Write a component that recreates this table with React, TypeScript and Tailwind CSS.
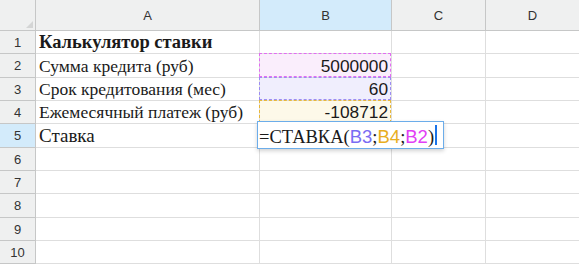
import React from "react";

type Mark = "pink" | "violet" | "amber";

type Row = {
  h: string;
  a?: React.ReactNode;
  b?: string;
  mark?: Mark;
};

const rows: Row[] = [
  { h: "h-[23px]", a: <span className="font-bold text-[18.5px]">Калькулятор ставки</span> },
  { h: "h-[24px]", a: "Сумма кредита (руб)", b: "5000000", mark: "pink" },
  { h: "h-[23px]", a: "Срок кредитования (мес)", b: "60", mark: "violet" },
  { h: "h-[23px]", a: "Ежемесячный платеж (руб)", b: "-108712", mark: "amber" },
  { h: "h-[24px]", a: <span className="text-[19px]">Ставка</span> },
  { h: "h-[23px]" },
  { h: "h-[23px]" },
  { h: "h-[24px]" },
  { h: "h-[23px]" },
  { h: "h-[23px]" },
];

const markFill: Record<Mark, string> = {
  pink: "bg-[#faeefc]",
  violet: "bg-[#f0eefd]",
  amber: "bg-[#fdf9e9]",
};

const markLine: Record<Mark, string> = {
  pink: "border-[#e26cf2]",
  violet: "border-[#9c8cf2]",
  amber: "border-[#e8b83a]",
};

const cols = "grid grid-cols-[36px_224px_132px_94px_93px]";
const headCell =
  "flex items-center justify-center border-r border-b border-[#c6c7c7] text-[13px] text-[#333] pt-px font-['Liberation_Sans',Arial,sans-serif]";

export default function App() {
  return (
    <div className="relative w-[579px] h-[264px] overflow-hidden bg-white text-[#1a1a1a]">
      {/* column letters */}
      <div className={cols + " h-[31px] bg-[#eff0f0]"}>
        <div className="relative border-r border-b border-[#c6c7c7]">
          <div className="absolute right-[2px] bottom-[2px] w-0 h-0 border-l-[7px] border-l-transparent border-b-[7px] border-b-[#d4d5d5]" />
        </div>
        <div className={headCell}>A</div>
        <div className={headCell + " bg-[#d3ebfb]"}>B</div>
        <div className={headCell}>C</div>
        <div className={headCell + " border-r-0"}>D</div>
      </div>

      {rows.map((r, i) => (
        <div key={i} className={cols + " " + r.h}>
          <div className={headCell + " " + (i === 4 ? "bg-[#d3ebfb]" : "bg-[#eff0f0]")}>{i + 1}</div>
          <div className="flex items-end pl-[3px] pb-[2px] border-r border-b border-[#dedede] text-[17.5px] leading-none whitespace-nowrap font-['Liberation_Serif','Times_New_Roman',serif]">
            {r.a}
          </div>
          <div
            className={
              "relative flex items-end justify-end pr-[3px] pb-[2px] border-r border-b border-[#dedede] text-[17.3px] leading-none font-['Liberation_Sans',Arial,sans-serif] " +
              (r.mark ? markFill[r.mark] : "")
            }
          >
            {r.mark && (
              <div className={"absolute -left-px -top-px right-0 bottom-0 border border-dashed " + markLine[r.mark]} />
            )}
            <span className="relative">{r.b}</span>
          </div>
          <div className="border-r border-b border-[#dedede]" />
          <div className="border-b border-[#dedede]" />
        </div>
      ))}

      {/* in-cell formula editor over B5 */}
      <div className="absolute left-[257px] top-[121px] w-[187px] h-[28px] bg-white border border-[#6cadea] shadow-[0_2px_4px_rgba(0,0,0,0.18)] flex items-end pl-px pb-[2px] text-[18.5px] leading-none whitespace-nowrap font-['Liberation_Serif','Times_New_Roman',serif]">
        <span>=СТАВКА(</span>
        <span className="text-[#7a6cf3] font-['Liberation_Sans',Arial,sans-serif]">B3</span>
        <span>;</span>
        <span className="text-[#e8ae1e] font-['Liberation_Sans',Arial,sans-serif]">B4</span>
        <span>;</span>
        <span className="text-[#e23ff5] font-['Liberation_Sans',Arial,sans-serif]">B2</span>
        <span>)</span>
        <span className="ml-px mb-px w-[2px] h-[20px] bg-[#1a73e8]" />
      </div>
    </div>
  );
}
